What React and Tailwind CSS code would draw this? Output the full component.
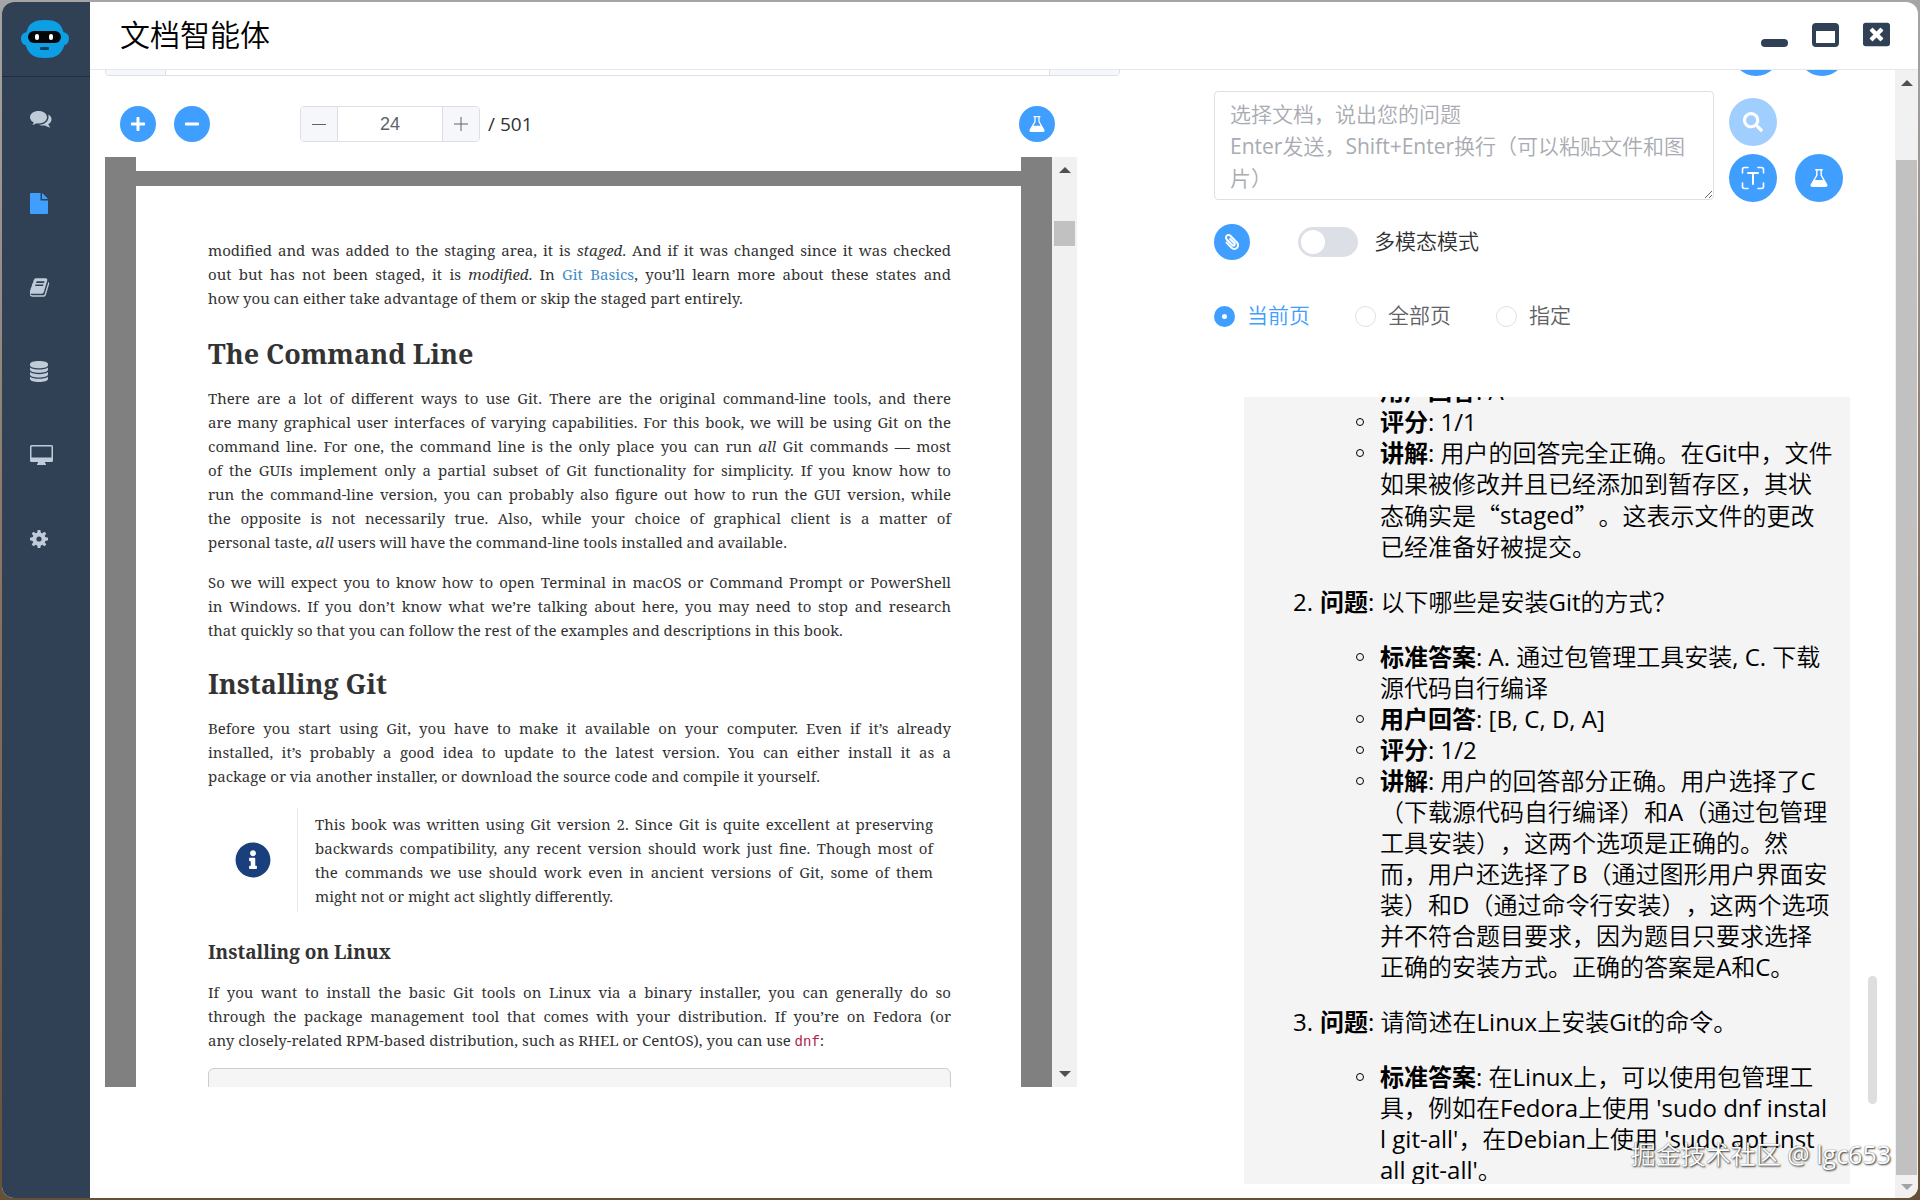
import { FaPlus, FaMinus, FaSearch, FaPaperclip, FaInfoCircle, FaWindowClose } from "react-icons/fa";

function Robot() {
  return (
    <svg viewBox="0 0 48 38" className="mr-0.5 h-[38px] w-12" aria-hidden="true">
      <path d="M24 0C35 0 40 3 42.500 12C46 13 48 15 48 18C48 22 46 25 43.500 25C40 35 35 38 24 38C13 38 8 35 4.500 25C2 25 0 22 0 18C0 15 2 13 5.500 12C8 3 13 0 24 0Z" fill="#0d9fe4" />
      <rect x="7" y="11" width="33" height="12" rx="6" fill="#050608" />
      <rect x="14" y="14" width="4" height="6" rx="2" fill="#fff" />
      <rect x="28" y="14" width="4" height="6" rx="2" fill="#fff" />
      <rect x="19" y="27" width="9" height="3" rx="1" fill="#12405e" />
    </svg>
  );
}

function Comments() {
  return (
    <svg viewBox="0 0 22 17" className="h-[17px] w-[22px]" fill="currentColor" aria-hidden="true">
      <path d="M8.500 0C13.200 0 17 2.700 17 6.200S13.200 12.400 8.500 12.400C7.900 12.400 7.200 12.300 6.600 12.200C5.400 13.100 4 13.700 2.300 13.900C3 13.100 3.500 12.300 3.700 11.300C1.400 10.200 0 8.300 0 6.200C0 2.700 3.800 0 8.500 0Z" />
      <path d="M18.300 3.500C20.400 4.600 21.500 6.300 21.500 8.300C21.500 10.400 20.300 12.200 18.300 13.300C18.600 14.400 19.300 15.400 20.300 16.500C18.300 16.300 16.600 15.600 15.200 14.500C13 14.800 10.800 14.500 9 13.700C14.300 13.600 18.500 10.500 18.500 6.200C18.500 5.200 18.500 4.400 18.300 3.500Z" />
    </svg>
  );
}

function FileIcon() {
  return (
    <svg viewBox="0 0 18 21" className="h-[21px] w-[18px]" fill="currentColor" aria-hidden="true">
      <path d="M0 1Q0 0 1 0H10.500V7.500H18V20Q18 21 17 21H1Q0 21 0 20ZM12 0.200Q12.500 0.300 13 0.800L17.200 5Q17.700 5.500 17.800 6H12Z" />
    </svg>
  );
}

function Book() {
  return (
    <svg viewBox="64 128 1664 1536" className="h-[19px] w-5" fill="currentColor" aria-hidden="true">
      <path d="M1639 478q40 57 18 129l-275 906q-19 64-76.500 107.500t-122.500 43.500h-923q-77 0-148.500-53.500t-99.500-131.500q-24-67-2-127 0-4 3-27t4-37q1-8-3-21.500t-3-19.500q2-11 8-21t16.500-23.500 16.500-23.500q23-38 45-91.500t30-91.500q3-10 .5-30t-.5-28q3-11 17-28t17-23q21-36 42-92t25-90q1-9-2.500-32t.5-28q4-13 22-30.500t22-22.500q19-26 42.500-84.500t27.500-96.500q1-8-3-25.500t-2-26.500q2-8 9-18t18-23 17-21q8-12 16.500-30.500t15-35 16-36 19.500-32 26.500-23.500 36-11.500 47.500 5.500l-1 3q38-9 51-9h761q74 0 114 56t18 130l-274 906q-36 119-71.500 153.500t-128.500 34.500h-869q-27 0-38 15-11 16-1 43 24 70 144 70h923q29 0 56-15.500t35-41.500l300-987q7-22 5-57 38 15 59 43zm-1064 2q-4 13 2 22.500t20 9.500h608q13 0 25.500-9.500t16.500-22.500l21-64q4-13-2-22.500t-20-9.500h-608q-13 0-25.500 9.500t-16.500 22.500zm-83 256q-4 13 2 22.500t20 9.500h608q13 0 25.500-9.500t16.500-22.500l21-64q4-13-2-22.500t-20-9.500h-608q-13 0-25.500 9.500t-16.500 22.500z" />
    </svg>
  );
}

function Database() {
  return (
    <svg viewBox="0 0 18 21" className="h-[21px] w-[18px]" fill="currentColor" aria-hidden="true">
      <path d="M9 0C14 0 18 1.300 18 3V4.200C18 5.900 14 7.200 9 7.200S0 5.900 0 4.200V3C0 1.300 4 0 9 0Z" />
      <path d="M0 6.500C1.800 8 5.400 8.600 9 8.600S16.200 8 18 6.500V8.800C18 10.500 14 11.800 9 11.800S0 10.500 0 8.800Z" />
      <path d="M0 11.100C1.800 12.600 5.400 13.200 9 13.200S16.200 12.600 18 11.100V13.400C18 15.100 14 16.400 9 16.400S0 15.100 0 13.400Z" />
      <path d="M0 15.700C1.800 17.200 5.400 17.800 9 17.800S16.200 17.200 18 15.700V18C18 19.700 14 21 9 21S0 19.700 0 18Z" />
    </svg>
  );
}

function Monitor() {
  return (
    <svg viewBox="0 0 23 20" className="h-5 w-[23px]" fill="currentColor" aria-hidden="true">
      <path fillRule="evenodd" d="M1.500 0H21.500Q23 0 23 1.500V15.500Q23 17 21.500 17H15V18.500H16V20H7V18.500H8V17H1.500Q0 17 0 15.500V1.500Q0 0 1.500 0ZM1.500 1.500V12.500H21.500V1.500Z" />
    </svg>
  );
}

function Gear() {
  return (
    <svg viewBox="-9 -9 18 18" className="size-[18px]" fill="currentColor" aria-hidden="true">
      <circle r="4.600" fill="none" stroke="currentColor" strokeWidth="4" />
      {[0, 45, 90, 135].map((a) => (
        <g key={a} transform={`rotate(${a})`}>
          <path d="M-1.900-6L-1.300-9H1.300L1.900-6ZM-1.900 6L-1.300 9H1.300L1.900 6Z" />
        </g>
      ))}
    </svg>
  );
}

function Flask({ className }) {
  return (
    <svg viewBox="0 0 18 18" className={className} fill="currentColor" aria-hidden="true">
      <path fillRule="evenodd" d="M5.200 0H12.800V1.400H11.900V6.200L17.200 15.200Q18.400 18 15.400 18H2.600Q-0.400 18 0.800 15.200L6.100 6.200V1.400H5.200ZM7.500 1.400V6.600L4.900 11H13.100L10.500 6.600V1.400Z" />
    </svg>
  );
}

function ScanType() {
  return (
    <svg viewBox="0 0 24 24" className="size-6" fill="none" stroke="currentColor" strokeWidth="1.600" strokeLinecap="round" strokeLinejoin="round" aria-hidden="true">
      <path d="M1.500 7V3.500Q1.500 1.500 3.500 1.500H7M17 1.500H20.500Q22.500 1.500 22.500 3.500V7M22.500 17V20.500Q22.500 22.500 20.500 22.500H17M7 22.500H3.500Q1.500 22.500 1.500 20.500V17" />
      <path d="M7 7H17M12 7V18" strokeWidth="2" />
    </svg>
  );
}

function Arrow({ down, className }) {
  return (
    <svg viewBox="0 0 12 6" className={className} fill="currentColor" aria-hidden="true">
      <path d={down ? "M0 0H12L6 6Z" : "M0 6H12L6 0Z"} />
    </svg>
  );
}

function Round({ label, className, children }) {
  return (
    <button type="button" aria-label={label} className={`flex shrink-0 items-center justify-center rounded-full text-white ${className}`}>
      {children}
    </button>
  );
}

const nav = [
  ["对话", <Comments />],
  ["文档", <FileIcon />],
  ["书籍", <Book />],
  ["数据", <Database />],
  ["屏幕", <Monitor />],
  ["设置", <Gear />],
];

function Sidebar() {
  return (
    <nav className="flex w-[88px] shrink-0 flex-col bg-[#304156]">
      <div className="flex h-[75px] items-center justify-center border-b border-[#1f2d3d]"><Robot /></div>
      <ul>
        {nav.map(([name, icon], i) => (
          <li key={name} className="h-[84px]">
            <a href="#" aria-label={name} className={`flex h-full items-center pl-7 ${i === 1 ? "text-[#409eff]" : "text-[#bfcbd9]"}`}>{icon}</a>
          </li>
        ))}
      </ul>
    </nav>
  );
}

function Header() {
  return (
    <header className="flex h-[68px] shrink-0 items-center justify-between border-b border-[#e4e7ed] pr-7 pb-0.5 pl-[30px]">
      <h1 className="text-[30px] leading-10 font-[350] text-black">文档智能体</h1>
      <div className="flex gap-6 text-[#304156]">
        <button type="button" aria-label="最小化" className="flex h-6 w-[27px] items-end"><span className="h-2 w-full rounded-sm bg-current" /></button>
        <button type="button" aria-label="最大化" className="h-6 w-[27px] rounded-sm border-4 border-t-8 border-current" />
        <button type="button" aria-label="关闭" className="flex h-6 w-[27px] items-center justify-center"><FaWindowClose className="size-[27px]" /></button>
      </div>
    </header>
  );
}

function Lines({ lines, className = "" }) {
  return (
    <p className={`leading-6 ${className}`}>
      {lines.map((line, i) => (
        <span key={i} className={`block whitespace-nowrap ${i < lines.length - 1 ? "[text-align-last:justify]" : ""}`}>{line}</span>
      ))}
    </p>
  );
}

function BookPage() {
  return (
    <article className="pr-[70px] pl-[72px] font-['Noto_Serif','Liberation_Serif',serif] text-[15px] text-[#333]">
      <Lines className="pt-[52px]" lines={[
        <>modified and was added to the staging area, it is <em>staged</em>. And if it was changed since it was checked</>,
        <>out but has not been staged, it is <em>modified</em>. In <a href="#" className="text-[#428bca]">Git Basics</a>, you’ll learn more about these states and</>,
        "how you can either take advantage of them or skip the staged part entirely.",
      ]} />
      <h2 className="mt-6 text-[27px] leading-10 font-bold">The Command Line</h2>
      <Lines className="mt-3" lines={[
        "There are a lot of different ways to use Git. There are the original command-line tools, and there",
        "are many graphical user interfaces of varying capabilities. For this book, we will be using Git on the",
        <>command line. For one, the command line is the only place you can run <em>all</em> Git commands — most</>,
        "of the GUIs implement only a partial subset of Git functionality for simplicity. If you know how to",
        "run the command-line version, you can probably also figure out how to run the GUI version, while",
        "the opposite is not necessarily true. Also, while your choice of graphical client is a matter of",
        <>personal taste, <em>all</em> users will have the command-line tools installed and available.</>,
      ]} />
      <Lines className="mt-4" lines={[
        "So we will expect you to know how to open Terminal in macOS or Command Prompt or PowerShell",
        "in Windows. If you don’t know what we’re talking about here, you may need to stop and research",
        "that quickly so that you can follow the rest of the examples and descriptions in this book.",
      ]} />
      <h2 className="mt-[22px] text-[27px] leading-10 font-bold">Installing Git</h2>
      <Lines className="mt-3" lines={[
        "Before you start using Git, you have to make it available on your computer. Even if it’s already",
        "installed, it’s probably a good idea to update to the latest version. You can either install it as a",
        "package or via another installer, or download the source code and compile it yourself.",
      ]} />
      <aside className="mt-5 flex items-center">
        <div className="flex w-[89px] shrink-0 justify-center"><FaInfoCircle className="size-9 text-[#19407c]" /></div>
        <Lines className="flex-1 border-l border-[#e8e8e8] py-1 pr-[18px] pl-[17px]" lines={[
          "This book was written using Git version 2. Since Git is quite excellent at preserving",
          "backwards compatibility, any recent version should work just fine. Though most of",
          "the commands we use should work even in ancient versions of Git, some of them",
          "might not or might act slightly differently.",
        ]} />
      </aside>
      <h3 className="mt-6 text-[19px] leading-8 font-bold">Installing on Linux</h3>
      <Lines className="mt-3" lines={[
        "If you want to install the basic Git tools on Linux via a binary installer, you can generally do so",
        "through the package management tool that comes with your distribution. If you’re on Fedora (or",
        <>any closely-related RPM-based distribution, such as RHEL or CentOS), you can use <code className="font-['Liberation_Mono',monospace] text-[14px] text-[#b12146]">dnf</code>:</>,
      ]} />
      <div className="mt-3.5 h-20 rounded-md border border-[#ccc] bg-[#f5f5f5]" />
    </article>
  );
}

function Viewer() {
  return (
    <div className="flex h-[930px] max-w-[972px] overflow-hidden">
      <div className="w-[31px] shrink-0 bg-[#808080]" />
      <div className="min-w-0 flex-1 overflow-hidden pt-[14px]">
        <div className="h-[15px] bg-[#808080]" />
        <BookPage />
      </div>
      <div className="w-[31px] shrink-0 bg-[#808080]" />
      <div className="flex w-[25px] shrink-0 flex-col items-center bg-[#f1f1f1] py-2.5 text-[#505050]">
        <Arrow className="h-1.5 w-3" />
        <div className="mt-12 h-[25px] w-[21px] bg-[#c1c1c1]" />
        <Arrow down className="mt-auto h-1.5 w-3" />
      </div>
    </div>
  );
}

function DocumentPane() {
  return (
    <section className="max-w-[1030px] min-w-0 flex-1 pl-[15px]">
      <div className="flex h-1.5 items-end overflow-hidden">
        <div className="flex h-12 w-full shrink-0 overflow-hidden rounded border border-[#dcdfe6]">
          <div className="w-[60px] border-r border-[#dcdfe6] bg-[#f5f7fa]" />
          <div className="flex-1" />
          <div className="w-[70px] border-l border-[#dcdfe6] bg-[#f5f7fa]" />
        </div>
      </div>
      <div className="mt-[30px] flex h-9 max-w-[950px] items-center pl-[15px]">
        <Round label="放大" className="size-9 bg-[#409eff]"><FaPlus className="size-4" /></Round>
        <Round label="缩小" className="ml-[18px] size-9 bg-[#409eff]"><FaMinus className="size-4" /></Round>
        <div className="ml-[90px] flex h-9 overflow-hidden rounded border border-[#dcdfe6]">
          <button type="button" aria-label="上一页" className="flex w-9 items-center justify-center bg-[#f5f7fa]"><span className="h-px w-3.5 bg-[#606266]" /></button>
          <input aria-label="页码" defaultValue="24" className="w-[106px] border-x border-[#dcdfe6] text-center font-['Liberation_Sans',sans-serif] text-[18px] text-[#606266]" />
          <button type="button" aria-label="下一页" className="flex w-9 items-center justify-center bg-[#f5f7fa] text-[#606266]">
            <svg viewBox="0 0 14 14" className="size-3.5" stroke="currentColor" aria-hidden="true"><path d="M0 7H14M7 0V14" /></svg>
          </button>
        </div>
        <span className="ml-2 text-[19px] text-[#303133]">/ 501</span>
        <Round label="实验" className="ml-auto size-9 bg-[#409eff]"><Flask className="size-4" /></Round>
      </div>
      <div className="mt-[15px]"><Viewer /></div>
    </section>
  );
}

function Term({ children }) {
  return <strong className="font-['Open_Sans','Noto_Sans_CJK_SC',sans-serif] font-bold">{children}</strong>;
}

function Bullet({ name, children }) {
  return (
    <li className="flex">
      <span className="mt-3 mr-4 size-2 shrink-0 rounded-full border border-black" />
      <div className="whitespace-pre"><Term>{name}</Term>: {children}</div>
    </li>
  );
}

function Question({ n, text, children }) {
  return (
    <li>
      <p className="my-6 flex pl-[49px]"><span className="w-[27px]">{n}.</span><span><Term>问题</Term>: {text}</span></p>
      <ul className="pl-28">{children}</ul>
    </li>
  );
}

function Answer() {
  return (
    <div className="flex h-[787px] w-full max-w-[606px] flex-col overflow-hidden bg-[#f4f4f4] text-[24px] leading-[31px] text-black [text-spacing-trim:space-all]">
      <ol className="-mt-[22px]">
        <li>
          <ul className="pl-28">
            <Bullet name="用户回答">A</Bullet>
            <Bullet name="评分">1/1</Bullet>
            <Bullet name="讲解">
              {"用户的回答完全正确。在Git中，文件\n如果被修改并且已经添加到暂存区，其状\n态确实是"}
              <q className="align-top font-['Noto_Sans_CJK_SC_DemiLight','Noto_Sans_CJK_SC',sans-serif] [quotes:'“'_'”']"><span className="align-top font-['Open_Sans',sans-serif]">staged</span></q>
              {"。这表示文件的更改\n已经准备好被提交。"}
            </Bullet>
          </ul>
        </li>
        <Question n="2" text="以下哪些是安装Git的方式？">
          <Bullet name="标准答案">{"A. 通过包管理工具安装, C. 下载\n源代码自行编译"}</Bullet>
          <Bullet name="用户回答">[B, C, D, A]</Bullet>
          <Bullet name="评分">1/2</Bullet>
          <Bullet name="讲解">{"用户的回答部分正确。用户选择了C\n（下载源代码自行编译）和A（通过包管理\n工具安装），这两个选项是正确的。然\n而，用户还选择了B（通过图形用户界面安\n装）和D（通过命令行安装），这两个选项\n并不符合题目要求，因为题目只要求选择\n正确的安装方式。正确的答案是A和C。"}</Bullet>
        </Question>
        <Question n="3" text="请简述在Linux上安装Git的命令。">
          <Bullet name="标准答案">{"在Linux上，可以使用包管理工\n具，例如在Fedora上使用 'sudo dnf instal\nl git-all'，在Debian上使用 'sudo apt inst\nall git-all'。"}</Bullet>
        </Question>
      </ol>
    </div>
  );
}

function ChatPane() {
  return (
    <section className="w-[681px] shrink-0">
      <div className="ml-[518px] flex h-1.5 items-end gap-[18px] overflow-hidden">
        <Round label="麦克风" className="size-12 bg-[#409eff]" />
        <Round label="发送" className="size-12 bg-[#409eff]" />
      </div>
      <div className="mt-[15px] flex items-start">
        <textarea
          aria-label="问题"
          placeholder={"选择文档，说出您的问题\nEnter发送，Shift+Enter换行（可以粘贴文件和图片）"}
          className="h-[109px] w-[500px] resize overflow-hidden rounded border border-[#dcdfe6] px-[15px] py-1.5 text-[21px] leading-8 placeholder:text-[#a8abb2]"
        />
        <div className="ml-[15px] grid grid-cols-2 gap-x-[18px] gap-y-2 pt-[7px]">
          <Round label="搜索" className="size-12 bg-[#a0cfff]"><FaSearch className="size-5" /></Round>
          <span />
          <Round label="识别文字" className="size-12 bg-[#409eff]"><ScanType /></Round>
          <Round label="实验" className="size-12 bg-[#409eff]"><Flask className="size-[18px]" /></Round>
        </div>
      </div>
      <div className="mt-[22px] flex h-9 items-center">
        <Round label="附件" className="size-9 bg-[#409eff]"><FaPaperclip className="size-4 -scale-x-100" /></Round>
        <label className="ml-12 flex items-center gap-4 text-[21px] text-[#303133]">
          <input type="checkbox" role="switch" className="h-[30px] w-[60px] appearance-none rounded-full bg-[#dcdfe6] before:mt-[3px] before:ml-[3px] before:block before:size-6 before:rounded-full before:bg-white" />
          多模态模式
        </label>
      </div>
      <div className="mt-10 flex h-8 items-center gap-[45px] text-[21px] text-[#606266]">
        {["当前页", "全部页", "指定"].map((name, i) => (
          <label key={name} className="flex items-center gap-3 has-checked:text-[#409eff]">
            <input type="radio" name="scope" defaultChecked={i === 0} className="size-[21px] appearance-none rounded-full border border-[#dcdfe6] bg-white checked:border-8 checked:border-[#409eff]" />
            {name}
          </label>
        ))}
      </div>
      <div className="mt-[65px] flex pl-[30px]">
        <Answer />
        <div className="mt-[579px] ml-[18px] h-32 w-[9px] shrink-0 rounded-full bg-[#dddee0]" />
      </div>
    </section>
  );
}

export default function App() {
  return (
    <div className="h-screen overflow-hidden bg-linear-to-b from-[#a5a5a5] via-[#8a7260] to-[#65503a] p-0.5 font-['Open_Sans','Noto_Sans_CJK_SC_DemiLight','Noto_Sans_CJK_SC',sans-serif]">
      <div className="relative flex h-full overflow-hidden rounded-xl bg-white">
        <Sidebar />
        <div className="flex min-w-0 flex-1 flex-col">
          <Header />
          <div className="flex min-h-0 flex-1">
            <main className="flex min-w-0 flex-1 justify-between overflow-hidden">
              <DocumentPane />
              <ChatPane />
            </main>
            <div className="flex w-[23px] shrink-0 flex-col items-center bg-[#f1f1f1] pt-2.5 pb-2 text-[#505050]">
              <Arrow className="h-1.5 w-3 shrink-0" />
              <div className="mt-[74px] mb-[9px] w-[21px] flex-1 bg-[#c1c1c1]" />
              <Arrow down className="h-1.5 w-3 shrink-0 text-[#a3a3a3]" />
            </div>
          </div>
        </div>
        <p className="absolute right-[27px] bottom-7 text-[25px] leading-8 whitespace-nowrap text-white [text-shadow:1px_1px_2px_#333,0_0_1px_#555]">掘金技术社区 @ lgc653</p>
      </div>
    </div>
  );
}
